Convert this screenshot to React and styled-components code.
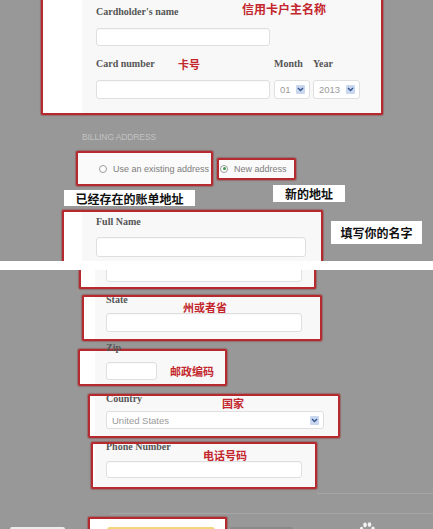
import React from 'react';
import styled, { createGlobalStyle } from 'styled-components';

const GlobalStyle = createGlobalStyle`
  html, body {
    margin: 0;
    padding: 0;
    background: #fff;
  }
  * {
    box-sizing: border-box;
  }
`;

const Page = styled.div`
  width: 433px;
  height: 529px;
  overflow: hidden;
  display: flex;
  flex-direction: column;
  background: #fff;
`;

const Shot = styled.section`
  flex-shrink: 0;
  height: ${props => props.$h}px;
  overflow: hidden;
  display: flex;
  flex-direction: column;
  background: #989898;
`;

const Seam = styled.div`
  flex-shrink: 0;
  height: 9px;
  background: #fff;
`;

// red annotation frame around a part of the form
const Panel = styled.div`
  flex-shrink: 0;
  display: flex;
  width: ${props => props.$w}px;
  height: ${props => props.$h}px;
  margin-left: ${props => props.$x || 0}px;
  margin-top: ${props => props.$gap || 0}px;
  border: 2px solid #b52a2f;
  border-radius: 2px;
  box-shadow: 0 0 1px 1px rgba(150, 30, 30, 0.35);
  background: ${props => props.$bg || '#f8f8f8'};
  overflow: hidden;
  ${props => props.$cut === 'top' && 'border-top: none; border-radius: 0 0 2px 2px;'}
  ${props => props.$cut === 'bottom' && 'border-bottom: none; border-radius: 2px 2px 0 0;'}
`;

const Gutter = styled.div`
  flex-shrink: 0;
  width: ${props => props.$w}px;
  background: #fff;
`;

const PanelBody = styled.div`
  flex: 1;
  display: flex;
  flex-direction: column;
  justify-content: ${props => (props.$bottom ? 'flex-end' : 'flex-start')};
  padding: ${props => props.$pad || '0 0 0 14px'};
`;

const LabelRow = styled.div`
  display: flex;
  align-items: flex-start;
  height: ${props => props.$h || 14}px;
  margin-top: ${props => props.$top || 0}px;
`;

const FieldLabel = styled.span`
  flex-shrink: 0;
  width: ${props => (props.$w ? `${props.$w}px` : 'auto')};
  font-family: 'Liberation Serif', 'DejaVu Serif', serif;
  font-weight: bold;
  font-size: 10px;
  line-height: ${props => props.$lh || 14}px;
  color: #555;
  white-space: nowrap;
`;

const OuterLabel = styled(FieldLabel)`
  position: relative;
  z-index: 1;
  display: block;
  margin: 3px 0 -3px 106px;
  line-height: 8px;
  height: 8px;
`;

const Note = styled.span`
  font-family: 'Noto Sans CJK SC', 'Noto Sans', sans-serif;
  font-weight: bold;
  font-size: ${props => props.$size || 11}px;
  line-height: 14px;
  color: #c3262c;
  white-space: nowrap;
  margin-top: ${props => props.$dy || 0}px;
`;

const TextInput = styled.input`
  flex-shrink: 0;
  display: block;
  width: ${props => props.$w}px;
  height: ${props => props.$h || 19}px;
  margin: ${props => props.$top || 0}px 0 0 0;
  padding: 0 4px;
  border: 1px solid #dfdfdf;
  border-radius: 3px;
  background: #fff;
  box-shadow: inset 0 1px 1px rgba(0, 0, 0, 0.03);
  outline: none;
`;

const SelectBox = styled.div`
  display: flex;
  align-items: center;
  justify-content: space-between;
  width: ${props => props.$w}px;
  height: ${props => props.$h || 19}px;
  margin-top: ${props => props.$top || 0}px;
  padding: 0 4px 0 5px;
  border: 1px solid #dfdfdf;
  border-radius: 3px;
  background: #fff;
  font-family: 'Liberation Sans', Arial, sans-serif;
  font-size: 9.5px;
  color: #9a9a9a;
`;

const ArrowBox = styled.span`
  display: flex;
  align-items: center;
  justify-content: center;
  width: 9px;
  height: 9px;
  border-radius: 1px;
  background: #c9d7ef;
`;

const Chevron = () => (
  <svg width="7" height="5" viewBox="0 0 7 5">
    <path d="M1 1 L3.5 3.6 L6 1" fill="none" stroke="#34558f" strokeWidth="1.4" />
  </svg>
);

const Select = ({ value, w, h, top }) => (
  <SelectBox $w={w} $h={h} $top={top}>
    <span>{value}</span>
    <ArrowBox>
      <Chevron />
    </ArrowBox>
  </SelectBox>
);

const CardGrid = styled.div`
  display: grid;
  grid-template-columns: 174px 35px 47px;
  column-gap: 4px;
  margin-top: ${props => props.$top || 0}px;
  align-items: center;
`;

const GridCell = styled.div`
  display: flex;
  align-items: center;
  height: 14px;
`;

const SectionTitle = styled.div`
  margin: 17px 0 0 82px;
  font-family: 'Liberation Sans', Arial, sans-serif;
  font-size: 8.5px;
  line-height: 10px;
  color: #c2c2c2;
  letter-spacing: -0.1px;
`;

const RadioRow = styled.div`
  display: flex;
  align-items: center;
  gap: 4px;
  margin: 9px 0 0 76px;
`;

const RadioPanel = styled(Panel)`
  align-items: center;
  padding-left: ${props => props.$pl}px;
  font-family: 'Liberation Sans', Arial, sans-serif;
  font-size: 9px;
  color: #7c7c7c;
`;

const RadioDot = styled.span`
  flex-shrink: 0;
  display: flex;
  align-items: center;
  justify-content: center;
  width: 8px;
  height: 8px;
  margin-right: 6px;
  border: 1px solid #9b9b9b;
  border-radius: 50%;
  background: #fff;

  &::after {
    content: '';
    display: ${props => (props.$on ? 'block' : 'none')};
    width: 3px;
    height: 3px;
    border-radius: 50%;
    background: #3c9a52;
  }
`;

const CaptionRow = styled.div`
  display: flex;
  align-items: flex-start;
  margin-top: ${props => props.$top || 0}px;
  margin-left: ${props => props.$x || 0}px;
`;

const Caption = styled.div`
  flex-shrink: 0;
  display: flex;
  align-items: center;
  justify-content: center;
  width: ${props => props.$w}px;
  height: ${props => props.$h}px;
  margin-left: ${props => props.$x || 0}px;
  margin-top: ${props => props.$top || 0}px;
  background: #fff;
  font-family: 'Noto Sans CJK SC', 'Noto Sans', sans-serif;
  font-weight: bold;
  font-size: 12px;
  color: #111;
  white-space: nowrap;
`;

const InlineRow = styled.div`
  display: flex;
  align-items: center;
  gap: ${props => props.$gap || 0}px;
  margin-top: ${props => props.$top || 0}px;
`;

const Rule = styled.div`
  flex-shrink: 0;
  height: 1px;
  margin: ${props => props.$top}px 0 0 ${props => props.$x}px;
  background: #a6a6a6;
`;

const FooterRow = styled.div`
  display: flex;
  align-items: flex-start;
  margin-top: 3px;
`;

const Block = styled.div`
  flex-shrink: 0;
  width: ${props => props.$w}px;
  height: 12px;
  margin: ${props => props.$top || 0}px 0 0 ${props => props.$x || 0}px;
  background: ${props => props.$bg};
  border-radius: 2px 2px 0 0;
`;

const SubmitButton = styled.div`
  width: 108px;
  height: 12px;
  margin: 8px 0 0 17px;
  border-radius: 3px 3px 0 0;
  background: #f2d77c;
`;

const Paw = styled.svg`
  flex-shrink: 0;
  margin: 5px 0 0 64px;
`;

const App = () => (
  <>
    <GlobalStyle />
    <Page>
      <Shot $h={261}>
        <Panel $x={41} $w={342} $h={115} $cut="top">
          <Gutter $w={39} />
          <PanelBody>
            <LabelRow $top={5} $h={14}>
              <FieldLabel $w={146}>Cardholder&#39;s name</FieldLabel>
              <Note $size={12} $dy={-3}>信用卡户主名称</Note>
            </LabelRow>
            <TextInput $w={174} $h={18} $top={9} />
            <CardGrid $top={11}>
              <GridCell>
                <FieldLabel $w={82}>Card number</FieldLabel>
                <Note>卡号</Note>
              </GridCell>
              <GridCell>
                <FieldLabel>Month</FieldLabel>
              </GridCell>
              <GridCell>
                <FieldLabel>Year</FieldLabel>
              </GridCell>
            </CardGrid>
            <CardGrid $top={9}>
              <TextInput $w={174} $h={19} />
              <Select value="01" w={36} />
              <Select value="2013" w={47} />
            </CardGrid>
          </PanelBody>
        </Panel>

        <SectionTitle>BILLING ADDRESS</SectionTitle>

        <RadioRow>
          <RadioPanel $w={137} $h={35} $pl={21} $bg="#fafafa">
            <RadioDot />
            Use an existing address
          </RadioPanel>
          <RadioPanel $w={79} $h={22} $pl={1} $bg="#fafafa">
            <RadioDot $on />
            New address
          </RadioPanel>
        </RadioRow>

        <CaptionRow $top={-1} $x={64}>
          <Caption $w={131} $h={16} $top={5}>已经存在的账单地址</Caption>
          <Caption $w={72} $h={17} $x={78}>新的地址</Caption>
        </CaptionRow>

        <CaptionRow $top={4} $x={62}>
          <Panel $w={261} $h={51} $cut="bottom">
            <Gutter $w={18} />
            <PanelBody>
              <LabelRow $top={3}>
                <FieldLabel>Full Name</FieldLabel>
              </LabelRow>
              <TextInput $w={210} $h={20} $top={8} />
            </PanelBody>
          </Panel>
          <Caption $w={91} $h={23} $x={8} $top={11}>填写你的名字</Caption>
        </CaptionRow>
      </Shot>

      <Seam />

      <Shot $h={259}>
        <Panel $x={79} $w={237} $h={19} $cut="top">
          <Gutter $w={14} />
          <PanelBody $bottom $pad="0 0 5px 11px">
            <TextInput $w={196} $h={19} />
          </PanelBody>
        </Panel>

        <Panel $x={82} $w={240} $h={46} $gap={6}>
          <Gutter $w={11} />
          <PanelBody $pad="0 0 0 11px">
            <LabelRow $top={-3} $h={19}>
              <FieldLabel $w={77} $lh={12}>State</FieldLabel>
              <Note $dy={6}>州或者省</Note>
            </LabelRow>
            <TextInput $w={196} $h={19} />
          </PanelBody>
        </Panel>

        <OuterLabel>Zip</OuterLabel>
        <Panel $x={78} $w={149} $h={37}>
          <Gutter $w={15} />
          <PanelBody $pad="11px 0 0 11px">
            <InlineRow $gap={13}>
              <TextInput $w={51} $h={18} />
              <Note>邮政编码</Note>
            </InlineRow>
          </PanelBody>
        </Panel>

        <Panel $x={88} $w={252} $h={44} $gap={8}>
          <Gutter $w={5} />
          <PanelBody $pad="0 0 0 11px">
            <LabelRow $top={-3} $h={18}>
              <FieldLabel $w={116} $lh={12}>Country</FieldLabel>
              <Note $dy={3}>国家</Note>
            </LabelRow>
            <Select value="United States" w={218} h={18} />
          </PanelBody>
        </Panel>

        <Panel $x={91} $w={226} $h={47} $gap={4}>
          <Gutter $w={2} />
          <PanelBody $pad="0 0 0 11px">
            <LabelRow $top={-3} $h={21}>
              <FieldLabel $w={97} $lh={12}>Phone Number</FieldLabel>
              <Note $dy={7}>电话号码</Note>
            </LabelRow>
            <TextInput $w={196} $h={17} $top={-1} />
          </PanelBody>
        </Panel>

        <Rule $top={4} $x={317} />
        <Rule $top={19} $x={110} />

        <FooterRow>
          <Block $w={55} $x={10} $top={10} $bg="#ececec" />
          <Panel $x={23} $w={139} $h={20} $bg="#fff" $cut="bottom">
            <SubmitButton />
          </Panel>
          <Block $w={63} $x={3} $top={10} $bg="#8a8a8a" />
          <Paw width="20" height="12" viewBox="0 0 20 12">
            <ellipse cx="8" cy="3" rx="1.8" ry="2.4" fill="#f2f2f2" />
            <ellipse cx="12.5" cy="2.6" rx="1.8" ry="2.4" fill="#f2f2f2" />
            <ellipse cx="4.5" cy="7" rx="1.7" ry="2.2" fill="#f2f2f2" />
            <ellipse cx="16" cy="6.6" rx="1.7" ry="2.2" fill="#f2f2f2" />
            <ellipse cx="10.2" cy="10.5" rx="4" ry="3" fill="#f2f2f2" />
          </Paw>
        </FooterRow>
      </Shot>
    </Page>
  </>
);

export default App;
